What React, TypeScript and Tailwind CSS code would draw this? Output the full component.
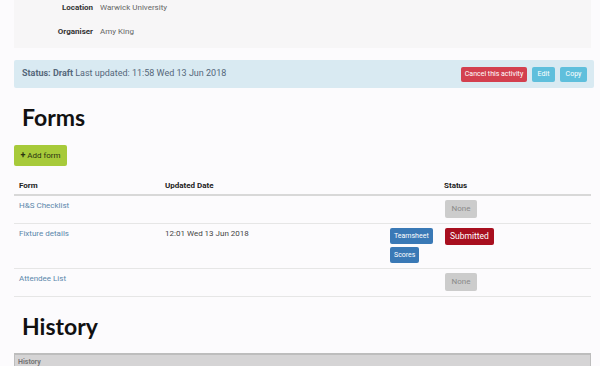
import React from 'react';

const rows = [
  { name: 'H&S Checklist', date: '', actions: [] as string[], status: 'none' },
  { name: 'Fixture details', date: '12:01 Wed 13 Jun 2018', actions: ['Teamsheet', 'Scores'], status: 'submitted' },
  { name: 'Attendee List', date: '', actions: [] as string[], status: 'none' },
];

const StatusBadge = ({ status }: { status: string }) =>
  status === 'submitted' ? (
    <span className="inline-flex h-[17px] items-center rounded-[2px] bg-[#a80f1f] px-[5px] text-[8.5px] text-white">Submitted</span>
  ) : (
    <span className="inline-flex h-[18px] w-[32px] items-center justify-center rounded-[2px] bg-[#cccccc] text-[8px] text-[#8a8a8a]">None</span>
  );

export default function App() {
  return (
    <div className="h-[366px] w-[600px] overflow-hidden bg-[#fcfbfd] font-['Roboto',sans-serif] text-[#333]">
      {/* activity details */}
      <div className="ml-[14px] mr-[9px] flex h-[48px] flex-col gap-[12px] bg-[#f7f6f7] pt-[2px] text-[8px]">
        <div className="flex items-center">
          <span className="w-[79px] text-right font-bold text-[#333]">Location</span>
          <span className="pl-[7px] text-[#666]">Warwick University</span>
        </div>
        <div className="flex items-center">
          <span className="w-[79px] text-right font-bold text-[#333]">Organiser</span>
          <span className="pl-[7px] text-[#666]">Amy King</span>
        </div>
      </div>

      {/* status bar */}
      <div className="ml-[14px] mr-[6px] mt-[12px] flex h-[28px] items-center justify-between rounded-[2px] bg-[#d9eaf2] pl-[8px] pr-[7px]">
        <div className="text-[9px] text-[#55677a]">
          <span className="font-bold">Status: Draft</span> Last updated: 11:58 Wed 13 Jun 2018
        </div>
        <div className="flex gap-[5px] text-[7px] text-white">
          <span className="flex h-[15px] w-[66px] items-center justify-center rounded-[2px] bg-[#d3404f]">Cancel this activity</span>
          <span className="flex h-[15px] w-[23px] items-center justify-center rounded-[2px] bg-[#5fbfdc]">Edit</span>
          <span className="flex h-[15px] w-[27px] items-center justify-center rounded-[2px] bg-[#5fbfdc]">Copy</span>
        </div>
      </div>

      <h2 className="ml-[22px] mt-[15px] font-['Lato',sans-serif] text-[23px] font-bold leading-[28px] text-[#111]">Forms</h2>

      <div className="ml-[14px] mt-[14px] flex h-[21px] w-[53px] items-center justify-center gap-[2px] rounded-[2px] bg-[#a7ca3a] text-[8px] text-[#2a3310]">
        <span className="text-[9px] font-bold leading-none">+</span>
        <span>Add form</span>
      </div>

      {/* forms table */}
      <div className="ml-[14px] mr-[9px] mt-[11px] text-[8px]">
        <div className="flex h-[19px] items-center border-b-2 border-[#d8d8d8] font-bold text-[#222]">
          <div className="w-[146px] pl-[5px]">Form</div>
          <div className="w-[229px] pl-[5px]">Updated Date</div>
          <div className="w-[55px]" />
          <div>Status</div>
        </div>
        {rows.map((r) => (
          <div
            key={r.name}
            className={`flex border-b border-[#e6e6e6] pt-[4px] ${r.actions.length ? 'h-[45px]' : 'h-[28px]'}`}
          >
            <div className="w-[146px] pl-[5px] text-[#5b87ab]">{r.name}</div>
            <div className="w-[229px] pl-[5px] text-[#444]">{r.date}</div>
            <div className="flex w-[52px] flex-col items-start gap-[3px] pl-[1px]">
              {r.actions.map((a) => (
                <span key={a} className="flex h-[16px] items-center rounded-[2px] bg-[#3a79b6] px-[4px] text-[7px] text-white">
                  {a}
                </span>
              ))}
            </div>
            <div className="pl-[4px]">
              <StatusBadge status={r.status} />
            </div>
          </div>
        ))}
      </div>

      <h2 className="ml-[22px] mt-[15px] font-['Lato',sans-serif] text-[23px] font-bold leading-[28px] text-[#111]">History</h2>

      <div className="ml-[14px] mr-[9px] mt-[13px] h-[30px] border-x border-t-2 border-[#bdbdbd] bg-[#d5d4d5] pl-[3px] pt-[2px] text-[7px] font-bold text-[#777]">
        History
      </div>
    </div>
  );
}
